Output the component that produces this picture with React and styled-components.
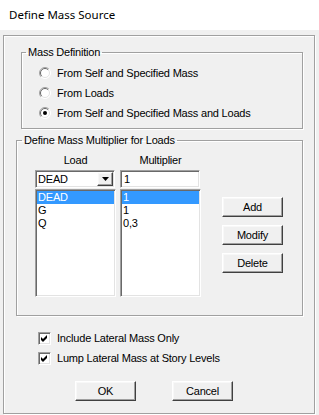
import styled, { createGlobalStyle } from "styled-components"

const GlobalStyle = createGlobalStyle`
  * { box-sizing: border-box; }
  body {
    margin: 0;
    background: #F0F0F0;
    font-family: "Liberation Sans", Arial, sans-serif;
    font-size: 11px;
    letter-spacing: -0.2px;
    color: #000000;
  }
`

const loads = [
  { name: "DEAD", mult: "1" },
  { name: "G", mult: "1" },
  { name: "Q", mult: "0,3" },
]

export default function App() {
  return (
    <>
      <GlobalStyle />
      <Janela>
        <BarraTitulo>Define Mass Source</BarraTitulo>
        <Moldura>
          <Grupo $left={17}>
            <Legenda $offset={4}>Mass Definition</Legenda>
            <ListaRadios>
              <Opcao texto="From Self and Specified Mass" />
              <Opcao texto="From Loads" />
              <Opcao texto="From Self and Specified Mass and Loads" marcado />
            </ListaRadios>
          </Grupo>

          <Grupo $left={12} $top={5}>
            <Legenda $offset={5}>Define Mass Multiplier for Loads</Legenda>
            <AreaCargas>
              <Coluna>
                <Rotulo>Load</Rotulo>
                <Combo>
                  <ComboTexto>DEAD</ComboTexto>
                  <BotaoSeta>
                    <svg width="7" height="4" viewBox="0 0 7 4">
                      <polygon points="0,0 7,0 3.5,4" fill="#000" />
                    </svg>
                  </BotaoSeta>
                </Combo>
                <Lista>
                  {loads.map((l, i) => (
                    <Item key={l.name} $ativo={i === 0}>{l.name}</Item>
                  ))}
                </Lista>
              </Coluna>
              <Coluna>
                <Rotulo>Multiplier</Rotulo>
                <Campo>1</Campo>
                <Lista>
                  {loads.map((l, i) => (
                    <Item key={l.name} $ativo={i === 0}>{l.mult}</Item>
                  ))}
                </Lista>
              </Coluna>
              <ColunaBotoes>
                <Botao>Add</Botao>
                <Botao>Modify</Botao>
                <Botao>Delete</Botao>
              </ColunaBotoes>
            </AreaCargas>
          </Grupo>

          <ListaChecks>
            <Marcador texto="Include Lateral Mass Only" />
            <Marcador texto="Lump Lateral Mass at Story Levels" />
          </ListaChecks>

          <LinhaBotoes>
            <Botao>OK</Botao>
            <Botao>Cancel</Botao>
          </LinhaBotoes>
        </Moldura>
      </Janela>
    </>
  )
}

function Opcao({ texto, marcado }) {
  return (
    <LinhaOpcao>
      <svg width="12" height="12" viewBox="0 0 12 12">
        <circle cx="6" cy="6" r="5.5" fill="#fff" />
        <path d="M9.9 2.1 A5.5 5.5 0 0 0 2.1 9.9" stroke="#a0a0a0" fill="none" />
        <path d="M9.2 2.8 A4.5 4.5 0 0 0 2.8 9.2" stroke="#696969" fill="none" />
        <path d="M9.9 2.1 A5.5 5.5 0 0 1 2.1 9.9" stroke="#ffffff" fill="none" />
        <path d="M9.2 2.8 A4.5 4.5 0 0 1 2.8 9.2" stroke="#e3e3e3" fill="none" />
        {marcado && <circle cx="6" cy="6" r="2" fill="#000" />}
      </svg>
      <span>{texto}</span>
    </LinhaOpcao>
  )
}

function Marcador({ texto }) {
  return (
    <LinhaOpcao>
      <CaixaCheck>
        <svg width="9" height="9" viewBox="0 0 9 9">
          <path d="M1 3 L3 5 L7 1 L7 4 L3 8 L1 6 Z" fill="#000" />
        </svg>
      </CaixaCheck>
      <span>{texto}</span>
    </LinhaOpcao>
  )
}

const afundado = `
  border: 1px solid;
  border-color: #a0a0a0 #ffffff #ffffff #a0a0a0;
  box-shadow: inset 1px 1px 0 #696969, inset -1px -1px 0 #e3e3e3;
  background: #ffffff;
`

const elevado = `
  border: 1px solid;
  border-color: #ffffff #404040 #404040 #ffffff;
  box-shadow: inset -1px -1px 0 #a0a0a0, inset 1px 1px 0 #f8f8f8;
  background: #F0F0F0;
`

const Janela = styled.div`
  width: 319px;
  height: 415px;
  display: flex;
  flex-direction: column;
  background: #F0F0F0;
  overflow: hidden;
`

const BarraTitulo = styled.div`
  height: 30px;
  background: #ffffff;
  display: flex;
  align-items: center;
  padding: 0 0 2px 9px;
  font-family: "Noto Sans", "Liberation Sans", sans-serif;
  font-size: 11.5px;
  letter-spacing: 0;
`

const Moldura = styled.div`
  margin: 5px 0 0 3px;
  width: 312px;
  height: 379px;
  border: 1px solid #a0a0a0;
  box-shadow: inset 1px 1px 0 #ffffff, 1px 1px 0 #ffffff;
  display: flex;
  flex-direction: column;
  padding-top: 10px;
`

const Grupo = styled.fieldset`
  margin: ${(p) => p.$top || 0}px 11px 0 ${(p) => p.$left}px;
  padding: 0;
  min-inline-size: 0;
  border: 1px solid #a0a0a0;
  box-shadow: inset 1px 1px 0 #ffffff, 1px 1px 0 #ffffff;
`

const Legenda = styled.legend`
  margin-left: ${(p) => p.$offset}px;
  padding: 0 2px;
  line-height: 13px;
  font-size: 11px;
`

const ListaRadios = styled.div`
  display: flex;
  flex-direction: column;
  padding: 4px 0 5px 17px;
`

const LinhaOpcao = styled.div`
  height: 20px;
  display: flex;
  align-items: center;
  gap: 6px;
  white-space: nowrap;
`

const AreaCargas = styled.div`
  display: flex;
  align-items: flex-start;
  padding: 7px 0 18px 18px;
  gap: 4px;
`

const Coluna = styled.div`
  width: 81px;
  display: flex;
  flex-direction: column;
`

const Rotulo = styled.div`
  height: 13px;
  line-height: 13px;
  text-align: center;
  margin-bottom: 3px;
`

const Combo = styled.div`
  ${afundado}
  height: 18px;
  width: 80px;
  padding: 1px;
  display: flex;
  align-items: stretch;
  margin-bottom: 1px;
`

const ComboTexto = styled.div`
  flex: 1;
  padding-left: 1px;
  line-height: 14px;
`

const BotaoSeta = styled.div`
  ${elevado}
  width: 16px;
  display: flex;
  align-items: center;
  justify-content: center;
`

const Campo = styled.div`
  ${afundado}
  height: 18px;
  width: 80px;
  padding: 0 3px;
  line-height: 16px;
  margin-bottom: 1px;
`

const Lista = styled.div`
  ${afundado}
  height: 108px;
  padding: 1px;
`

const Item = styled.div`
  height: 13px;
  line-height: 13px;
  padding-left: 1px;
  background: ${(p) => (p.$ativo ? "#3399FF" : "transparent")};
  color: ${(p) => (p.$ativo ? "#ffffff" : "#000000")};
`

const ColunaBotoes = styled.div`
  display: flex;
  flex-direction: column;
  gap: 8px;
  margin: 43px 0 0 17px;
`

const Botao = styled.button`
  ${elevado}
  width: 61px;
  height: 20px;
  padding: 0;
  font-family: inherit;
  font-size: 11px;
  letter-spacing: -0.2px;
  color: #000000;
`

const ListaChecks = styled.div`
  display: flex;
  flex-direction: column;
  margin-top: 12px;
  padding-left: 34px;
`

const CaixaCheck = styled.div`
  ${afundado}
  width: 13px;
  height: 13px;
  display: flex;
  align-items: center;
  justify-content: center;
`

const LinhaBotoes = styled.div`
  display: flex;
  gap: 36px;
  margin-top: 13px;
  padding-left: 71px;
`
